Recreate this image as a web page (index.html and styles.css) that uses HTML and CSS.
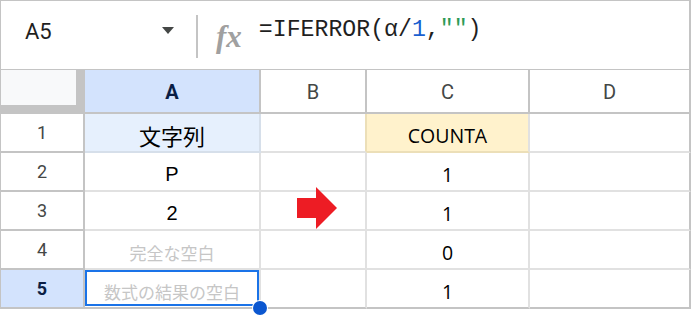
FILE: index.html
```html
<!DOCTYPE html>
<html lang="ja">
<head>
<meta charset="utf-8">
<title>IFERROR COUNTA</title>
<link rel="stylesheet" href="styles.css">
</head>
<body>
<div class="sheet">
  <div class="fbar">
    <div class="namebox"><span class="ref">A5</span><span class="caret"></span></div>
    <div class="sep"></div>
    <div class="fx">fx</div>
    <div class="formula">=IFERROR(α/<span class="num">1</span>,<span class="str">""</span>)</div>
  </div>
  <div class="grid">
    <div class="corner"><div class="corner-in"></div></div>
    <div class="colh sel">A</div>
    <div class="colh">B</div>
    <div class="colh">C</div>
    <div class="colh last">D</div>

    <div class="rowh">1</div>
    <div class="cell a1 cjk big">文字列</div>
    <div class="cell b1"></div>
    <div class="cell c1 num-cell">COUNTA</div>
    <div class="cell last"></div>

    <div class="rowh">2</div>
    <div class="cell sans">P</div>
    <div class="cell"></div>
    <div class="cell num-cell">1</div>
    <div class="cell last"></div>

    <div class="rowh">3</div>
    <div class="cell sans">2</div>
    <div class="cell"></div>
    <div class="cell num-cell">1</div>
    <div class="cell last"></div>

    <div class="rowh">4</div>
    <div class="cell cjk faint">完全な空白</div>
    <div class="cell"></div>
    <div class="cell num-cell">0</div>
    <div class="cell last"></div>

    <div class="rowh sel bottom">5</div>
    <div class="cell cjk faint bottom active">数式の結果の空白</div>
    <div class="cell bottom"></div>
    <div class="cell num-cell bottom">1</div>
    <div class="cell last bottom"></div>
  </div>
  <span class="handle"></span>
  <svg class="arrow" width="41" height="44" viewBox="0 0 41 44">
    <polygon points="0,12 19,12 19,1 40,22 19,43 19,32 0,32" fill="#ed1c24"/>
  </svg>
</div>
</body>
</html>
```
FILE: styles.css
```css
* { box-sizing: border-box; }
html, body { margin: 0; padding: 0; background: #ffffff; }
.sheet {
  position: relative;
  width: 691px;
  height: 319px;
  font-family: "Liberation Sans", Arial, sans-serif;
}
.fbar {
  display: flex;
  align-items: flex-start;
  height: 70px;
  border-top: 1px solid #c4c4c4;
  border-left: 1px solid #c4c4c4;
  border-right: 2px solid #c4c4c4;
  border-bottom: 1px solid #c4c4c4;
}
.namebox {
  display: flex;
  align-items: flex-start;
  width: 195px;
  padding-left: 24px;
  padding-right: 22px;
  justify-content: space-between;
}
.ref {
  margin-top: 20px;
  font-family: Roboto, "Liberation Sans", sans-serif;
  font-size: 22px;
  line-height: 22px;
  color: #1f1f1f;
}
.caret {
  margin-top: 26px;
  width: 0;
  height: 0;
  border-left: 6.5px solid transparent;
  border-right: 6.5px solid transparent;
  border-top: 7px solid #444746;
}
.sep {
  margin-top: 14px;
  width: 2px;
  height: 43px;
  background: #c4c4c4;
}
.fx {
  margin-top: 21px;
  margin-left: 18px;
  font-family: "Liberation Serif", "Times New Roman", serif;
  font-style: italic;
  font-weight: bold;
  font-size: 31px;
  line-height: 30px;
  color: #a0a0a0;
}
.formula {
  margin-top: 17px;
  margin-left: 17px;
  font-family: "Liberation Mono", "Courier New", monospace;
  font-size: 23.2px;
  line-height: 24px;
  color: #1f1f1f;
}
.formula .num { color: #1a5fd0; }
.formula .str { color: #2e9a56; }

.grid {
  display: grid;
  grid-template-columns: 84px 176px 106px 163px 161px;
  grid-template-rows: 44px repeat(5, 39px);
  border-left: 1px solid #c4c4c4;
}
.corner {
  background: #c4c4c4;
  border-right: 2px solid #c4c4c4;
  border-bottom: 2px solid #c4c4c4;
}
.corner-in {
  width: 75px;
  height: 35px;
  background: #f8f9fa;
}
.colh {
  display: flex;
  align-items: center;
  justify-content: center;
  border-right: 2px solid #c4c4c4;
  border-bottom: 2px solid #c4c4c4;
  font-family: Roboto, "Liberation Sans", sans-serif;
  font-size: 20px;
  color: #444746;
  padding-top: 1px;
}
.colh.sel {
  background: #d3e3fd;
  color: #0b1e45;
  font-weight: bold;
}
.rowh {
  display: flex;
  align-items: center;
  justify-content: center;
  border-right: 2px solid #c4c4c4;
  border-bottom: 2px solid #c4c4c4;
  font-family: Roboto, "Liberation Sans", sans-serif;
  font-size: 18px;
  color: #444746;
}
.rowh.sel {
  background: #d3e3fd;
  color: #0b1e45;
  font-weight: bold;
}
.cell {
  position: relative;
  display: flex;
  align-items: center;
  justify-content: center;
  padding-top: 5px;
  border-right: 2px solid #e1e1e1;
  border-bottom: 2px solid #e1e1e1;
  color: #000000;
}
.cell.last { border-right-color: #c4c4c4; }
.cell.bottom { border-bottom-color: #c4c4c4; }
.cjk {
  font-family: "Noto Sans CJK JP", "Noto Sans", sans-serif;
  font-size: 17px;
}
.cjk.big { font-size: 22px; }
.faint { color: #c6c6c6; }
.sans {
  font-family: "Liberation Sans", Arial, sans-serif;
  font-size: 20px;
}
.num-cell {
  font-family: "Open Sans", "Noto Sans", sans-serif;
  font-size: 19.5px;
}
.a1 {
  background: #e6f0fd;
  border-right-color: #d6dfea;
  border-bottom-color: #d6dfea;
}
.b1 { border-right-color: #ecdfb8; }
.c1 {
  background: #fff2cc;
  border-bottom-color: #ecdfb8;
}
.active::after {
  content: "";
  position: absolute;
  left: 0;
  top: 0;
  right: 0;
  bottom: 1px;
  border: 2px solid #1a73e8;
}
.handle {
  position: absolute;
  left: 253px;
  top: 301px;
  width: 14px;
  height: 14px;
  border-radius: 50%;
  background: #0b57d0;
  box-shadow: 0 0 0 1px #ffffff;
}
.arrow {
  position: absolute;
  left: 297px;
  top: 186px;
}
```
